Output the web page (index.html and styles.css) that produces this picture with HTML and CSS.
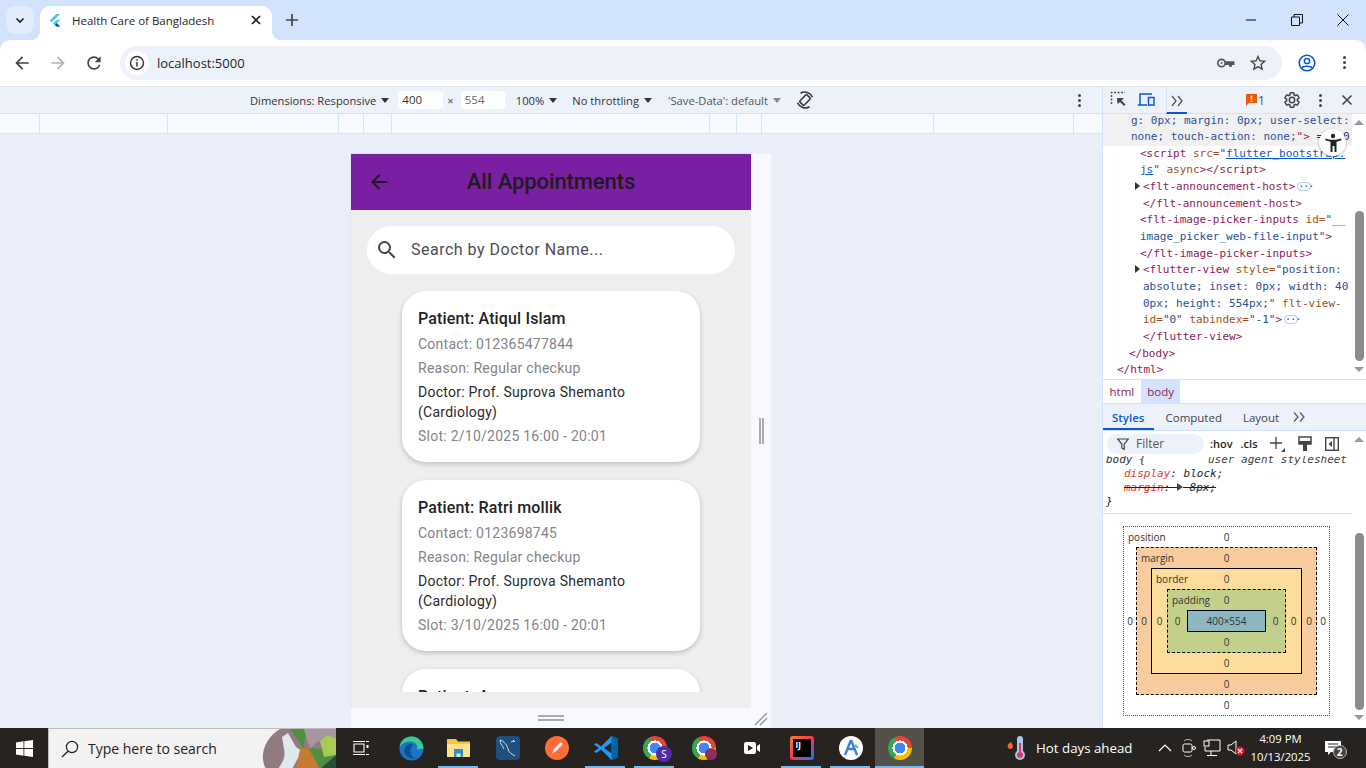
FILE: index.html
```html
<!DOCTYPE html>
<html lang="en">
<head>
    <meta charset="UTF-8">
    <title>Health Care of Bangladesh</title>
    <link rel="stylesheet" href="styles.css">
</head>
<body>
<div class="screen">

    <!-- browser tabs -->
    <div class="tabstrip">
        <div class="tab-search"><svg width="12" height="12" viewBox="0 0 12 12"><path d="M2.5 4.5 6 8l3.5-3.500" fill="none" stroke="#1f1f1f" stroke-width="1.6"/></svg></div>
        <div class="tab">
            <svg class="tab-logo" width="16" height="16" viewBox="0 0 16 16"><path d="M9.5 1 2 8.500l2.200 2.200L14 1z" fill="#47c5fb"/><path d="M9.5 8 5.700 11.800 9.500 15.500H14l-3.900-3.800L14 8z" fill="#47c5fb"/><path d="M7.800 13.800 9.500 15.500H14l-3.900-3.800z" fill="#00569e"/></svg>
            <span class="tab-title">Health Care of Bangladesh</span>
            <svg width="12" height="12" viewBox="0 0 12 12"><path d="M2 2l8 8M10 2l-8 8" stroke="#1f1f1f" stroke-width="1.7"/></svg>
        </div>
        <svg class="new-tab" width="14" height="14" viewBox="0 0 14 14"><path d="M7 1v12M1 7h12" stroke="#444" stroke-width="1.7"/></svg>
        <div class="win-controls">
            <svg width="12" height="12" viewBox="0 0 12 12"><path d="M1 6h10" stroke="#111" stroke-width="1"/></svg>
            <svg width="12" height="12" viewBox="0 0 12 12"><path d="M.5 3h8v8.500h-8zM3 3V.5h8.500V9H8.500" fill="none" stroke="#111"/></svg>
            <svg width="12" height="12" viewBox="0 0 12 12"><path d="M.5.5l11 11M11.500.5l-11 11" stroke="#111"/></svg>
        </div>
    </div>

    <!-- address bar -->
    <div class="toolbar">
        <svg class="nav-icon" width="24" height="24" viewBox="0 0 24 24"><path d="M20 11H7.830l5.590-5.590L12 4l-8 8 8 8 1.410-1.410L7.830 13H20z" fill="#444"/></svg>
        <svg class="nav-icon" width="24" height="24" viewBox="0 0 24 24"><path d="M4 11h12.170l-5.590-5.590L12 4l8 8-8 8-1.410-1.410L16.170 13H4z" fill="#b4b4b4"/></svg>
        <svg class="nav-icon" width="24" height="24" viewBox="0 0 24 24"><path d="M17.650 6.350A7.958 7.958 0 0 0 12 4c-4.420 0-7.990 3.580-7.990 8s3.570 8 7.990 8c3.730 0 6.840-2.550 7.730-6h-2.080A5.990 5.990 0 0 1 12 18c-3.310 0-6-2.690-6-6s2.690-6 6-6c1.660 0 3.140.690 4.220 1.780L13 11h7V4z" fill="#444"/></svg>
        <div class="omnibox">
            <span class="info-badge"><svg width="16" height="16" viewBox="0 0 16 16"><circle cx="8" cy="8" r="6.500" fill="none" stroke="#333" stroke-width="1.4"/><path d="M8 7v4.500M8 4.300v1.500" stroke="#333" stroke-width="1.5"/></svg></span>
            <span class="url">localhost:5000</span>
            <svg class="key-icon" width="20" height="20" viewBox="0 0 20 20"><circle cx="5.500" cy="10" r="3.700" fill="none" stroke="#555" stroke-width="1.7"/><circle cx="5.500" cy="10" r="1" fill="#555"/><path d="M9 8.300h9.500v3.800h-2.500v1.600h-3V12H9z" fill="#555"/></svg>
            <svg class="star-icon" width="20" height="20" viewBox="0 0 24 24"><path d="M22 9.240l-7.190-.620L12 2 9.190 8.630 2 9.240l5.460 4.730L5.820 21 12 17.270 18.180 21l-1.630-7.030L22 9.240zM12 15.400l-3.760 2.270 1-4.280-3.320-2.880 4.380-.380L12 6.100l1.710 4.040 4.380.380-3.320 2.880 1 4.280L12 15.400z" fill="#444"/></svg>
        </div>
        <svg class="profile" width="18" height="18" viewBox="0 0 18 18"><circle cx="9" cy="9" r="7.800" fill="none" stroke="#0b57d0" stroke-width="1.6"/><circle cx="9" cy="7" r="2.600" fill="none" stroke="#0b57d0" stroke-width="1.5"/><path d="M3.800 14c1.400-2.200 9-2.200 10.400 0" fill="none" stroke="#0b57d0" stroke-width="1.5"/></svg>
        <span class="dots dots-toolbar"><i></i><i></i><i></i></span>
    </div>

    <div class="workspace">

        <!-- page side with device emulation -->
        <div class="viewport">
            <div class="device-bar">
                <span>Dimensions: Responsive</span><b class="tri"></b>
                <span class="size-box">400</span><span class="times">×</span><span class="size-box size-dim">554</span>
                <span class="zoom-val">100%</span><b class="tri"></b>
                <span class="throttle">No throttling</span><b class="tri"></b>
                <span class="save-data">'Save-Data': default</span><b class="tri tri-grey"></b>
                <svg class="rotate" width="20" height="20" viewBox="0 0 20 20"><g fill="none" stroke="#333" stroke-width="1.6"><rect x="7" y="5" width="6" height="10" rx="1" transform="rotate(45 10 10)"/><path d="M5.500 3.200a8.500 8.500 0 0 1 12 4M14.500 16.800a8.500 8.500 0 0 1-12-4"/></g></svg>
                <span class="dots dots-device"><i></i><i></i><i></i></span>
            </div>
            <div class="ruler">
                <i style="width:40px"></i><i style="width:128px"></i><i style="width:171px"></i><i style="width:25px"></i><i style="width:28px"></i><i style="width:318px"></i><i style="width:27px"></i><i style="width:25px"></i><i style="width:172px"></i><i style="width:140px"></i>
            </div>
            <div class="stage">
                <div class="device">
                    <div class="phone">
                        <div class="appbar">
                            <svg width="24" height="24" viewBox="0 0 24 24"><path d="M20 11H7.830l5.590-5.590L12 4l-8 8 8 8 1.410-1.410L7.830 13H20z" fill="#1d1b20"/></svg>
                            <span class="appbar-title">All Appointments</span>
                        </div>
                        <div class="searchbar">
                            <svg width="24" height="24" viewBox="0 0 24 24"><path d="M15.500 14h-.790l-.280-.270A6.471 6.471 0 0 0 16 9.500 6.500 6.500 0 1 0 9.500 16c1.610 0 3.090-.590 4.230-1.570l.270.280v.790l5 4.990L20.490 19zm-6 0C7.010 14 5 11.990 5 9.500S7.010 5 9.500 5 14 7.010 14 9.500 11.990 14 9.500 14z" fill="#49454f"/></svg>
                            <span class="search-hint">Search by Doctor Name...</span>
                        </div>
                        <div class="list">
                            <div class="card">
                                <div class="patient">Patient: Atiqul Islam</div>
                                <div class="line">Contact: 012365477844</div>
                                <div class="line">Reason: Regular checkup</div>
                                <div class="line doctor">Doctor: Prof. Suprova Shemanto (Cardiology)</div>
                                <div class="line">Slot: 2/10/2025 16:00 - 20:01</div>
                            </div>
                            <div class="card">
                                <div class="patient">Patient: Ratri mollik</div>
                                <div class="line">Contact: 0123698745</div>
                                <div class="line">Reason: Regular checkup</div>
                                <div class="line doctor">Doctor: Prof. Suprova Shemanto (Cardiology)</div>
                                <div class="line">Slot: 3/10/2025 16:00 - 20:01</div>
                            </div>
                            <div class="card">
                                <div class="patient">Patient: A</div>
                            </div>
                        </div>
                    </div>
                    <div class="handle-right"><i></i><i></i></div>
                    <div class="handle-bottom"><i></i><i></i></div>
                    <div class="handle-corner"><svg width="14" height="14" viewBox="0 0 14 14"><path d="M1 13 13 1M6 13l7-7" stroke="#999" stroke-width="1.5"/></svg></div>
                </div>
            </div>
        </div>

        <!-- devtools -->
        <div class="devtools">
            <div class="dt-toolbar">
                <svg class="dt-inspect" width="18" height="18" viewBox="0 0 18 18"><path d="M1.500 13V1.500H15" fill="none" stroke="#555" stroke-width="1.5" stroke-dasharray="2 1.5"/><path d="M7 7h7l-2.500 2.500 4 4-1.500 1.500-4-4L7.500 13z" fill="#444"/></svg>
                <svg class="dt-device" width="18" height="18" viewBox="0 0 18 18"><path d="M1 14h9M3 14V3h12" fill="none" stroke="#0b57d0" stroke-width="1.5"/><rect x="11.500" y="6.500" width="5.500" height="7.500" fill="none" stroke="#0b57d0" stroke-width="1.5"/></svg>
                <span class="dt-more">
                    <svg width="14" height="12" viewBox="0 0 14 12"><path d="M2 1l4 5-4 5M8 1l4 5-4 5" fill="none" stroke="#555" stroke-width="1.3"/></svg>
                </span>
                <span class="dt-issues"><svg width="11" height="12" viewBox="0 0 11 12"><path d="M0 0h11v9H3l-3 3z" fill="#e8590c"/><path d="M5.500 1.500v4M5.500 6.500v1.500" stroke="#fff" stroke-width="1.4"/></svg>1</span>
                <svg class="dt-gear" width="18" height="18" viewBox="0 0 24 24"><path d="M19.140 12.940c.040-.300.060-.610.060-.940 0-.320-.020-.640-.070-.940l2.030-1.580a.490.490 0 0 0 .120-.610l-1.920-3.320a.488.488 0 0 0-.590-.220l-2.390.960c-.500-.380-1.030-.700-1.620-.940l-.360-2.540a.484.484 0 0 0-.480-.410h-3.840c-.240 0-.430.170-.470.410l-.360 2.540c-.590.240-1.130.570-1.620.940l-2.390-.960c-.220-.080-.470 0-.590.220L2.740 8.870c-.120.210-.080.470.120.610l2.030 1.580c-.050.300-.090.630-.090.940s.020.640.070.940l-2.030 1.580a.490.490 0 0 0-.12.610l1.920 3.320c.12.220.37.290.59.220l2.390-.96c.50.38 1.030.70 1.620.94l.36 2.54c.05.24.24.41.48.41h3.84c.24 0 .44-.17.47-.41l.36-2.54c.59-.24 1.13-.56 1.62-.94l2.39.96c.22.08.47 0 .59-.22l1.92-3.320c.12-.22.07-.47-.12-.61l-2.010-1.580zM12 15.600c-1.980 0-3.600-1.620-3.600-3.600s1.620-3.600 3.600-3.600 3.600 1.620 3.600 3.600-1.620 3.600-3.600 3.600z" fill="none" stroke="#444" stroke-width="2"/></svg>
                <span class="dots dots-dt"><i></i><i></i><i></i></span>
                <svg class="dt-close" width="12" height="12" viewBox="0 0 12 12"><path d="M1.500 1.500l9 9M10.500 1.500l-9 9" stroke="#444" stroke-width="1.6"/></svg>
            </div>

            <div class="elements">
                <div class="code">
                    <div class="cl sel in1"><span class="val">g: 0px; margin: 0px; user-select:</span></div>
                    <div class="cl sel in1"><span class="val">none; touch-action: none;</span><span class="tag">"&gt;</span> == $0</div>
                    <div class="cl in3"><span class="tag">&lt;script</span> <span class="att">src=</span><span class="val">"<u>flutter_bootstrap.</u></span></div>
                    <div class="cl in3"><span class="val"><u>js</u>"</span> <span class="att">async</span><span class="tag">&gt;&lt;/script&gt;</span></div>
                    <div class="cl in4 arrow"><span class="tag">&lt;flt-announcement-host&gt;</span><span class="more">···</span></div>
                    <div class="cl in4"><span class="tag">&lt;/flt-announcement-host&gt;</span></div>
                    <div class="cl in3"><span class="tag">&lt;flt-image-picker-inputs</span> <span class="att">id=</span><span class="val">"__</span></div>
                    <div class="cl in3"><span class="val">image_picker_web-file-input"</span><span class="tag">&gt;</span></div>
                    <div class="cl in3"><span class="tag">&lt;/flt-image-picker-inputs&gt;</span></div>
                    <div class="cl in4 arrow"><span class="tag">&lt;flutter-view</span> <span class="att">style=</span><span class="val">"position:</span></div>
                    <div class="cl in4"><span class="val">absolute; inset: 0px; width: 40</span></div>
                    <div class="cl in4"><span class="val">0px; height: 554px;"</span> <span class="att">flt-view-</span></div>
                    <div class="cl in4"><span class="att">id=</span><span class="val">"0"</span> <span class="att">tabindex=</span><span class="val">"-1"</span><span class="tag">&gt;</span><span class="more">···</span></div>
                    <div class="cl in4"><span class="tag">&lt;/flutter-view&gt;</span></div>
                    <div class="cl in2"><span class="tag">&lt;/body&gt;</span></div>
                    <div class="cl in0"><span class="tag">&lt;/html&gt;</span></div>
                </div>
                <div class="scrollbar sb-code"><b class="up"></b><i></i><b class="down"></b></div>
                <div class="a11y"><svg width="18" height="20" viewBox="0 0 18 20"><circle cx="9" cy="3" r="2.200" fill="#222"/><path d="M1 5.500c3 1 5 1.300 8 1.300s5-.3 8-1.300l.5 1.700-5 1.500V19h-2v-6H8.500v6h-2V8.700l-5-1.500z" fill="#222"/></svg></div>
            </div>

            <div class="crumbs"><span class="crumb tag">html</span><span class="crumb crumb-on tag">body</span></div>

            <div class="subtabs">
                <span class="subtab subtab-on">Styles</span><span class="subtab">Computed</span><span class="subtab">Layout</span>
                <svg class="subtab-more" width="12" height="10" viewBox="0 0 12 10"><path d="M1 .5 5 5 1 9.500M7 .5 11 5 7 9.500" fill="none" stroke="#555" stroke-width="1.2"/></svg>
            </div>

            <div class="styles-pane">
                <div class="styles-main">
                    <div class="filter-row">
                        <span class="filter"><svg width="12" height="12" viewBox="0 0 12 12"><path d="M.5 1h11L7.200 6v5.500L4.800 10V6z" fill="none" stroke="#444" stroke-width="1.2"/></svg>Filter</span>
                        <span class="f-btn hov">:hov</span><span class="f-btn cls">.cls</span>
                        <svg class="f-plus" width="16" height="16" viewBox="0 0 16 16"><path d="M7 1v12M1 7h12" stroke="#444" stroke-width="1.3"/><path d="M16 12v4h-4z" fill="#444"/></svg>
                        <svg class="f-paint" width="14" height="16" viewBox="0 0 14 16"><path d="M1 1h12v7H1z" fill="none" stroke="#444" stroke-width="1.5"/><path d="M1 5h12v3H1zM5 8h4v7H5z" fill="#444"/></svg>
                        <svg class="f-side" width="14" height="14" viewBox="0 0 14 14"><rect x=".7" y=".7" width="12.600" height="12.600" fill="none" stroke="#444" stroke-width="1.4"/><path d="M9 1v12" stroke="#444" stroke-width="1.4"/><path d="M7 4v6L3.500 7z" fill="#444"/></svg>
                    </div>
                    <div class="rule">
                        <div class="rule-line rule-head"><span>body {</span><span class="ua">user agent stylesheet</span></div>
                        <div class="rule-line rule-prop"><span class="prop">display</span>: block;</div>
                        <div class="rule-line rule-prop struck"><span class="prop">margin</span>: <span class="mini-tri"></span> 8px;</div>
                        <div class="rule-line">}</div>
                    </div>
                    <div class="boxmodel">
                        <div class="bm bm-position">
                            <div class="bm-top"><span class="bm-label">position</span><span>0</span></div>
                            <span class="bm-side">0</span>
                            <div class="bm bm-margin">
                                <div class="bm-top"><span class="bm-label">margin</span><span>0</span></div>
                                <span class="bm-side">0</span>
                                <div class="bm bm-border">
                                    <div class="bm-top"><span class="bm-label">border</span><span>0</span></div>
                                    <span class="bm-side">0</span>
                                    <div class="bm bm-padding">
                                        <div class="bm-top"><span class="bm-label">padding</span><span>0</span></div>
                                        <span class="bm-side">0</span>
                                        <div class="bm-content">400×554</div>
                                        <span class="bm-side">0</span>
                                        <div class="bm-bottom">0</div>
                                    </div>
                                    <span class="bm-side">0</span>
                                    <div class="bm-bottom">0</div>
                                </div>
                                <span class="bm-side">0</span>
                                <div class="bm-bottom">0</div>
                            </div>
                            <span class="bm-side">0</span>
                            <div class="bm-bottom">0</div>
                        </div>
                    </div>
                </div>
                <div class="scrollbar sb-styles"><b class="up"></b><i></i><b class="down"></b></div>
            </div>
        </div>
    </div>

    <!-- windows taskbar -->
    <div class="taskbar">
        <div class="start"><svg width="17" height="17" viewBox="0 0 17 17"><path d="M0 2.400 7.500 1.300v6.800H0zM8.300 1.200 17 0v8.100H8.300zM0 8.900h7.500v6.800L0 14.600zM8.300 8.900H17V17l-8.700-1.200z" fill="#fff"/></svg></div>
        <div class="task-search">
            <svg width="18" height="18" viewBox="0 0 18 18"><circle cx="11" cy="7" r="5.600" fill="none" stroke="#222" stroke-width="1.2"/><path d="M7 11.200 1 17" stroke="#222" stroke-width="1.3"/></svg>
            <span class="task-search-text">Type here to search</span>
            <svg class="task-art" width="76" height="40" viewBox="0 0 76 40">
                <path d="M20 0H76V40H6C-2 26 6 8 20 0z" fill="#8f7b80"/>
                <path d="M30 0h16l-2 18 32 4v18H56L44 20z" fill="#4f8f3f"/>
                <path d="M44 0h32v14l-10 2-8-4-8 8z" fill="#a596a0"/>
                <path d="M22 8 28 4l8 14 6 4-10 18H18c4-6 8-12 6-20z" fill="#dfe9ec"/>
                <path d="M36 40l4-20 8-2 12 22z" fill="#c77936"/>
                <path d="M60 12l8-6 8 4v16l-12 2z" fill="#a7cc55"/>
                <path d="M60 40l16-14v14z" fill="#244f3a"/>
            </svg>
        </div>
        <div class="task-icons">
            <div class="ti"><svg width="16" height="14" viewBox="0 0 16 14"><path d="M1 3h10v8H1zM0 .5h12M0 13.500h12" fill="none" stroke="#fff" stroke-width="1.1"/><path d="M13 .5h3M13 13.500h3" stroke="#fff"/><rect x="13.500" y="4" width="2" height="3" fill="#fff"/></svg></div>
            <div class="ti ti-edge"><svg width="25" height="25" viewBox="0 0 25 25"><circle cx="12.500" cy="12.500" r="12" fill="#1b74c9"/><path d="M24.500 12.500C24 5 18.500.5 12.500.5 6 .5 1.500 5 .5 11c2.500-4 7-6 11-5.500 4.500.5 7 3 7 6 0 1.500-1 2.500-3.500 2.500z" fill="#3ccb8e"/><path d="M12 8c-4 0-6.500 3-6.500 6.500 0 5 5 9 11.500 8-3.500-1-5.500-4-5.500-7 0-3 1-5.500 3-7z" fill="#0c4f8f"/></svg></div>
            <div class="ti ti-open"><svg width="23" height="20" viewBox="0 0 23 20"><path d="M0 1h9l2 2.500h12V19H0z" fill="#f6c445"/><path d="M0 6h23v13H0z" fill="#fde38a"/><path d="M7 11h9v8h-2.500v-3.500h-4V19H7z" fill="#2a8fd8"/></svg></div>
            <div class="ti"><div class="tile-mysql"><svg width="20" height="20" viewBox="0 0 20 20"><path d="M2 2c4 1 7 5 8 9s4 5 7 7M2 2c0 4 3 6 4 9M15 2l2 2M13 4l3-1" fill="none" stroke="#d7e4ee" stroke-width="1"/></svg></div></div>
            <div class="ti"><svg width="24" height="24" viewBox="0 0 24 24"><circle cx="12" cy="12" r="12" fill="#ff6c37"/><path d="M7 18l2-5 6-6c2-1 3 0 2 2l-6 6zM7 18l2 0" fill="#fff"/></svg></div>
            <div class="ti ti-open"><svg width="24" height="24" viewBox="0 0 24 24"><path d="M17.500 0 24 3v18l-6.500 3L7 13.500 2.500 17 0 15.500 5 12 0 8.500 2.500 7 7 10.500z" fill="#1f9cf0"/><path d="M17.500 0 24 3v18l-6.500 3z" fill="#0065a9"/><path d="M17.500 6.500v11L10 12z" fill="#27282c"/></svg></div>
            <div class="ti ti-open"><div class="chrome"></div><span class="chrome-s">S</span></div>
            <div class="ti"><div class="chrome"></div><span class="chrome-p"></span></div>
            <div class="ti"><svg width="17" height="12" viewBox="0 0 17 12"><rect width="12" height="12" rx="2" fill="#fff"/><path d="M4 3l5 3-5 3z" fill="#222"/><path d="M13 4l3-2v8l-3-2z" fill="#fff"/></svg></div>
            <div class="ti ti-open"><div class="tile-idea"><span>IJ</span></div></div>
            <div class="ti ti-open"><div class="tile-as"><svg width="18" height="20" viewBox="0 0 18 20"><path d="M9 2 3 17M9 2l6 15M5 11h8" fill="none" stroke="#3b7ddd" stroke-width="2.4"/><path d="M13 7l3 3" stroke="#3ccb8e" stroke-width="2"/></svg></div></div>
            <div class="ti ti-open ti-active"><div class="chrome"></div></div>
        </div>
        <div class="tray">
            <svg class="thermo" width="20" height="26" viewBox="0 0 20 26"><path d="M3.500 8c-2 1-2.500 4-1 5.500 2 1 4 .5 4.500-1.500.3-2-1.500-3-1.500-5z" fill="#ef6a2e"/><rect x="11" y="1" width="6" height="17" rx="3" fill="#a9c8ea"/><circle cx="14" cy="20" r="5" fill="#a9c8ea"/><circle cx="14" cy="20" r="3" fill="#e0366a"/><rect x="13" y="8" width="2" height="10" fill="#e0366a"/></svg>
            <span class="weather">Hot days ahead</span>
            <svg class="tray-chev" width="14" height="8" viewBox="0 0 14 8"><path d="M1 7l6-6 6 6" fill="none" stroke="#fff" stroke-width="1.2"/></svg>
            <svg class="tray-meet" width="14" height="20" viewBox="0 0 14 20"><rect x="1" y="6" width="9" height="8" rx="1.500" fill="none" stroke="#fff"/><circle cx="12" cy="10" r="1.500" fill="none" stroke="#fff"/><path d="M2 3c2-2 6-2 8 0M2 17c2 2 6 2 8 0" fill="none" stroke="#bbb"/></svg>
            <svg class="tray-net" width="18" height="18" viewBox="0 0 18 18"><path d="M4 1h13v11H2V8M8 12v4M4 16.500h10" fill="none" stroke="#fff"/><rect x="1" y="2" width="5" height="5" fill="#272320" stroke="#fff"/></svg>
            <svg class="tray-vol" width="18" height="18" viewBox="0 0 18 18"><path d="M1 6h3l5-4v13l-5-4H1z" fill="none" stroke="#fff"/><circle cx="13" cy="12" r="4.500" fill="#e81123"/><path d="M11 10l4 4M15 10l-4 4" stroke="#fff" stroke-width="1.2"/></svg>
            <div class="clock"><span>4:09 PM</span><span>10/13/2025</span></div>
            <div class="notif"><svg width="18" height="16" viewBox="0 0 18 16"><path d="M1 1h16v11H7l-3 3v-3H1z" fill="#fff"/><path d="M4 4h10M4 7h10" stroke="#272320"/></svg><span class="notif-count">2</span></div>
        </div>
    </div>
</div>
</body>
</html>
```

FILE: styles.css
```css
* {
    box-sizing: border-box;
}

body {
    margin: 0;
    background: #fff;
    font-family: 'Open Sans', 'Noto Sans', sans-serif;
    font-size: 12px;
    color: #1f1f1f;
    overflow: hidden;
}

.screen {
    width: 1366px;
    height: 768px;
    display: flex;
    flex-direction: column;
    overflow: hidden;
    background: #d3e3fd;
}

/* tabs */
.tabstrip {
    height: 40px;
    flex: none;
    display: flex;
    align-items: flex-end;
    padding-left: 6px;
}

.tab-search {
    width: 28px;
    height: 28px;
    margin-bottom: 6px;
    border-radius: 8px;
    background: #e1ebfb;
    display: flex;
    align-items: center;
    justify-content: center;
}

.tab {
    position: relative;
    width: 232px;
    height: 34px;
    margin-left: 6px;
    background: #fff;
    border-radius: 10px 10px 0 0;
    display: flex;
    align-items: center;
    padding: 0 10px 6px 8px;
}

/* little flares where the tab meets the toolbar */
.tab::before,
.tab::after {
    content: "";
    position: absolute;
    bottom: 0;
    width: 8px;
    height: 8px;
}

.tab::before {
    left: -8px;
    background: radial-gradient(circle at 0 0, transparent 7.5px, #fff 8px);
}

.tab::after {
    right: -8px;
    background: radial-gradient(circle at 100% 0, transparent 7.5px, #fff 8px);
}

.tab-logo {
    width: 14px;
    height: 14px;
}

.tab-title {
    flex: 1;
    margin-left: 10px;
    font-size: 11.5px;
}

.new-tab {
    margin: 0 0 13px 13px;
}

.win-controls {
    margin-left: auto;
    display: flex;
    gap: 34px;
    padding: 0 17px 14px 0;
}

/* address bar */
.toolbar {
    height: 47px;
    flex: none;
    background: #fff;
    border-bottom: 1px solid #dfe3ea;
    border-radius: 10px 10px 0 0;
    display: flex;
    align-items: center;
    padding: 0 0 1px 12px;
}

.nav-icon {
    width: 20px;
    height: 20px;
    margin-right: 16px;
}

.omnibox {
    width: 1162px;
    height: 34px;
    border-radius: 17px;
    background: #edf2fa;
    display: flex;
    align-items: center;
    padding-left: 5px;
}

.info-badge {
    width: 24px;
    height: 24px;
    border-radius: 50%;
    background: #fff;
    display: flex;
    align-items: center;
    justify-content: center;
}

.url {
    margin-left: 8px;
    font-size: 13px;
    flex: 1;
}

.key-icon {
    margin-right: 12px;
}

.star-icon {
    margin-right: 14px;
}

.profile {
    margin-left: 16px;
}

.dots {
    display: inline-flex;
    flex-direction: column;
    gap: 2px;
}

.dots i {
    width: 3px;
    height: 3px;
    border-radius: 50%;
    background: #444;
}

.dots-toolbar {
    margin-left: 27px;
}

/* main split */
.workspace {
    flex: 1;
    display: flex;
    min-height: 0;
}

.viewport {
    width: 1102px;
    display: flex;
    flex-direction: column;
    background: #e9eef8;
}

.device-bar {
    height: 27px;
    flex: none;
    background: #edf1fa;
    border-bottom: 1px solid #d3e3fd;
    display: flex;
    align-items: center;
    padding-left: 250px;
    font-size: 11.2px;
    color: #333;
}

.tri {
    width: 0;
    height: 0;
    margin-left: 5px;
    border-left: 4px solid transparent;
    border-right: 4px solid transparent;
    border-top: 5px solid #333;
}

.tri-grey {
    border-top-color: #888;
}

.size-box {
    width: 45px;
    height: 18px;
    margin-left: 9px;
    padding-left: 4px;
    line-height: 18px;
    font-size: 11.5px;
    background: #fff;
    border-radius: 3px;
}

.size-dim {
    width: 44px;
    color: #666;
    margin-left: 7px;
}

.times {
    margin-left: 4px;
    color: #555;
}

.zoom-val {
    margin-left: 11px;
}

.throttle {
    margin-left: 15px;
}

.save-data {
    margin-left: 16px;
    color: #555;
}

.rotate {
    margin-left: 14px;
}

.dots-device {
    margin-left: auto;
    margin-right: 21px;
}

.ruler {
    height: 20px;
    flex: none;
    display: flex;
    background: #f8f9ff;
    border-bottom: 1px solid #d3e3fd;
}

.ruler i {
    height: 19px;
    border-right: 1px solid #d3e3fd;
}

.stage {
    flex: 1;
    padding: 20px 0 0 351px;
}

.device {
    display: grid;
    grid-template-columns: 400px 20px;
    grid-template-rows: 554px 20px;
}

.handle-right {
    background: #f7f9ff;
    display: flex;
    justify-content: center;
    align-items: center;
    gap: 1px;
}

.handle-right i {
    width: 2px;
    height: 26px;
    background: #aaa;
}

.handle-bottom {
    background: #f7f9ff;
    display: flex;
    flex-direction: column;
    align-items: center;
    justify-content: center;
    gap: 2px;
}

.handle-bottom i {
    width: 26px;
    height: 2px;
    background: #aaa;
}

.handle-corner {
    background: #f7f9ff;
    display: flex;
    align-items: center;
    justify-content: center;
    padding-top: 2px;
}

/* flutter app */
.phone {
    background: #eeeeee;
    box-shadow: 0 0 1px #bbb;
    display: flex;
    flex-direction: column;
    font-family: Roboto, sans-serif;
}

.appbar {
    height: 56px;
    flex: none;
    background: #7b1fa2;
    display: flex;
    align-items: center;
    padding-left: 16px;
}

.appbar-title {
    flex: 1;
    margin: 0 40px 2px 0;
    text-align: center;
    font-size: 22px;
    font-weight: 500;
    letter-spacing: -0.1px;
    color: #1d1b20;
}

.searchbar {
    height: 48px;
    flex: none;
    margin: 16px 16px 0;
    background: #fff;
    border-radius: 24px;
    display: flex;
    align-items: center;
    padding: 0 0 1px 8px;
}

.search-hint {
    margin: 0 0 1px 12px;
    font-size: 16px;
    letter-spacing: 0.5px;
    color: #4f4c55;
}

.list {
    height: 401px;
    flex: none;
    margin-top: 17px;
    padding: 0 51px;
    overflow: hidden;
}

.card {
    height: 171px;
    margin-bottom: 18px;
    padding: 16px;
    background: #fff;
    border-radius: 24px;
    box-shadow: 0 2px 5px rgba(0, 0, 0, 0.2);
}

.patient {
    height: 24px;
    margin-bottom: 3px;
    font-size: 16px;
    font-weight: 500;
    line-height: 24px;
    letter-spacing: 0.15px;
    color: #222;
}

.line {
    margin-bottom: 4px;
    font-size: 14px;
    line-height: 20px;
    letter-spacing: 0.25px;
    color: #85838a;
}

.doctor {
    color: #2b2b2b;
}

/* devtools */
.devtools {
    position: relative;
    width: 264px;
    display: flex;
    flex-direction: column;
    background: #fff;
    border-left: 1px solid #d3e3fd;
}

.dt-toolbar {
    height: 27px;
    flex: none;
    background: #edf1fa;
    border-bottom: 1px solid #d3e3fd;
    display: flex;
    align-items: center;
    padding-left: 7px;
}

.dt-device {
    margin-left: 9px;
}

.dt-more {
    height: 27px;
    margin-left: 11px;
    padding: 7px 3px 0;
    border-bottom: 2px solid #0b57d0;
    border-left: 1px solid #d3e3fd;
}

.dt-issues {
    margin-left: 59px;
    margin-right: 10px;
    display: flex;
    align-items: center;
    gap: 1px;
    color: #555;
}

.dt-gear {
    margin-left: 8px;
}

.dots-dt {
    margin-left: 18px;
}

.dt-close {
    margin-left: 19px;
}

.elements {
    height: 266px;
    flex: none;
    display: flex;
    overflow: hidden;
    border-bottom: 1px solid #d3e3fd;
}

.code {
    flex: 1;
    min-width: 0;
    margin-top: -1.5px;
    font-family: 'DejaVu Sans Mono', monospace;
    font-size: 11px;
    line-height: 16.67px;
    color: #333;
    white-space: nowrap;
    overflow: hidden;
}

.cl {
    position: relative;
    height: 16.67px;
}

.sel {
    background: #f1f1f1;
}

.in0 { padding-left: 14px; }
.in1 { padding-left: 28px; }
.in2 { padding-left: 26px; }
.in3 { padding-left: 37px; }
.in4 { padding-left: 40px; }

.arrow::before {
    content: "";
    position: absolute;
    left: 32px;
    top: 3px;
    border-top: 4px solid transparent;
    border-bottom: 4px solid transparent;
    border-left: 5px solid #333;
}

.tag { color: #8e1a5b; }
.att { color: #a0501a; }
.val { color: #2a4f9b; }

.val u {
    color: #0b57d0;
}

.more {
    display: inline-block;
    width: 14px;
    height: 9px;
    margin-left: 2px;
    line-height: 7px;
    font-size: 10px;
    text-align: center;
    letter-spacing: -1px;
    color: #0b57d0;
    border: 1px solid #a8c7fa;
    border-radius: 5px;
}

.scrollbar {
    width: 14px;
    flex: none;
    display: flex;
    flex-direction: column;
    align-items: center;
    background: #fff;
}

.scrollbar i {
    width: 9px;
    background: #8c8c8c;
    border-radius: 5px;
}

.up,
.down {
    width: 0;
    height: 0;
    border-left: 5px solid transparent;
    border-right: 5px solid transparent;
}

.up {
    border-bottom: 5px solid #999;
}

.down {
    border-top: 5px solid #999;
}

.sb-code {
    padding-top: 6px;
}

.sb-code i {
    height: 150px;
    margin: 86px 0 6px;
}

.a11y {
    position: absolute;
    left: 216px;
    top: 42px;
    width: 27px;
    height: 27px;
    border-radius: 50%;
    background: #fff;
    box-shadow: 0 1px 3px rgba(0, 0, 0, 0.3);
    display: flex;
    align-items: center;
    justify-content: center;
}

.crumbs {
    height: 24px;
    flex: none;
    display: flex;
    font-size: 11.5px;
    border-bottom: 1px solid #d3e3fd;
}

.crumb {
    padding: 0 6.5px;
    line-height: 23px;
}

.crumb-on {
    background: #d3e3fd;
}

.subtabs {
    height: 27px;
    flex: none;
    background: #edf1fa;
    border-bottom: 1px solid #d3e3fd;
    display: flex;
    align-items: center;
    font-size: 11.5px;
    color: #444;
}

.subtab {
    padding: 0 10px 0 11px;
    height: 26px;
    line-height: 28px;
}

.subtab-on {
    padding: 0 10px 0 9px;
    color: #0b57d0;
    border-bottom: 2px solid #0b57d0;
    font-weight: 600;
}

.subtab-more {
    margin-left: 4px;
}

.styles-pane {
    flex: 1;
    min-height: 0;
    display: flex;
}

.styles-main {
    flex: 1;
    min-width: 0;
    display: flex;
    flex-direction: column;
    overflow: hidden;
}

.filter-row {
    height: 25px;
    flex: none;
    background: #fff;
    display: flex;
    align-items: center;
    padding-left: 4px;
}

.filter {
    width: 97px;
    height: 20px;
    border-radius: 10px;
    background: #edf1fa;
    display: flex;
    align-items: center;
    gap: 7px;
    padding-left: 10px;
    color: #555;
}

.f-btn {
    font-weight: 600;
    font-size: 11px;
}

.hov {
    margin-left: 6px;
}

.cls {
    margin-left: 8px;
}

.f-plus {
    margin-left: 11px;
}

.f-paint {
    margin-left: 13px;
}

.f-side {
    margin-left: 13px;
}

.rule {
    height: 58px;
    flex: none;
    padding-left: 3px;
    border-bottom: 1px solid #d3e3fd;
    font-family: 'DejaVu Sans Mono', monospace;
    font-size: 11px;
    font-style: italic;
    line-height: 14px;
    overflow: hidden;
}

.rule-head {
    display: flex;
    justify-content: space-between;
    margin-top: -3px;
    padding-right: 5px;
    color: #333;
}

.ua {
    color: #444;
}

.rule-prop {
    padding-left: 18px;
}

.prop {
    color: #e3392f;
}

.struck {
    text-decoration: line-through;
}

.mini-tri {
    display: inline-block;
    border-top: 4px solid transparent;
    border-bottom: 4px solid transparent;
    border-left: 6px solid #444;
}

.boxmodel {
    flex: 1;
    padding: 12px 0 0 21px;
    font-size: 10px;
    color: #333;
}

.bm {
    display: grid;
    grid-template-rows: 20px auto 20px;
    align-items: center;
    text-align: center;
}

.bm-top {
    grid-column: 1 / 4;
    display: grid;
    grid-template-columns: 1fr auto 1fr;
    text-align: center;
}

.bm-label {
    grid-column: 1;
    text-align: left;
    padding-left: 4px;
}

.bm-top span:last-child {
    grid-column: 2;
}

.bm-bottom {
    grid-column: 1 / 4;
}

.bm-position {
    width: 207px;
    grid-template-columns: 12px 1fr 12px;
    border: 1px dotted #555;
    margin-left: -1px;
}

.bm-margin {
    grid-template-columns: 14px 1fr 14px;
    background: #f9cc9d;
    border: 1px dashed #000;
}

.bm-border {
    grid-template-columns: 15px 1fr 15px;
    background: #fddd9b;
    border: 1px solid #000;
}

.bm-padding {
    grid-template-columns: 19px 1fr 19px;
    background: #c3d08b;
    border: 1px dashed #000;
}

.bm-content {
    height: 22px;
    line-height: 20px;
    background: #8cb6c0;
    border: 1px solid #000;
}

.sb-styles {
    padding-top: 6px;
}

.sb-styles i {
    height: 177px;
    margin: 91px 0 5px;
}

/* taskbar */
.taskbar {
    height: 40px;
    flex: none;
    background: #272320;
    display: flex;
    align-items: center;
    color: #fff;
}

.start {
    width: 48px;
    display: flex;
    justify-content: center;
}

.task-search {
    width: 288px;
    height: 40px;
    background: #f2f2f2;
    border: 1px solid #bbb;
    border-width: 1px 0 0 1px;
    display: flex;
    align-items: center;
    padding-left: 12px;
    color: #222;
}

.task-search-text {
    flex: 1;
    margin-left: 9px;
    font-size: 14px;
}

.task-icons {
    display: flex;
}

.ti {
    position: relative;
    width: 49px;
    height: 40px;
    display: flex;
    align-items: center;
    justify-content: center;
}

.ti-edge {
    padding-left: 3px;
}

.ti-open::after {
    content: "";
    position: absolute;
    left: 4px;
    right: 5px;
    bottom: 0;
    height: 2px;
    background: #76b9ed;
}

.ti-active {
    background: #55514a;
}

.ti-active::after {
    left: 0;
    right: 0;
}

.tile-mysql {
    width: 24px;
    height: 24px;
    border-radius: 4px;
    background: #1f4f7c;
    display: flex;
    align-items: center;
    justify-content: center;
}

.chrome {
    width: 24px;
    height: 24px;
    border-radius: 50%;
    background:
        radial-gradient(circle, #4285f4 0 31%, #fff 32% 44%, transparent 45%),
        conic-gradient(from -30deg, #ea4335 0 120deg, #fbbc04 120deg 240deg, #34a853 240deg 360deg);
}

.chrome-s {
    position: absolute;
    left: 26px;
    top: 18px;
    width: 16px;
    height: 16px;
    border-radius: 50%;
    background: #4a2fa8;
    font-size: 10px;
    line-height: 16px;
    text-align: center;
}

.chrome-p {
    position: absolute;
    left: 26px;
    top: 20px;
    width: 12px;
    height: 12px;
    border-radius: 50%;
    background: #8d2f5c;
}

.tile-idea {
    width: 24px;
    height: 24px;
    background: linear-gradient(135deg, #fc801d, #fe315d 50%, #087cfa);
    border-radius: 3px;
    padding: 3px;
}

.tile-idea span {
    display: block;
    width: 18px;
    height: 18px;
    background: #000;
    color: #fff;
    font-size: 8px;
    font-weight: 700;
    line-height: 12px;
    padding-left: 3px;
}

.tile-as {
    width: 24px;
    height: 24px;
    border-radius: 50%;
    background: #fff;
    display: flex;
    align-items: center;
    justify-content: center;
}

.tray {
    flex: 1;
    display: flex;
    align-items: center;
    padding-left: 82px;
}

.weather {
    margin-left: 10px;
    font-size: 13.3px;
}

.tray-chev {
    margin-left: 25px;
}

.tray-meet {
    margin-left: 10px;
}

.tray-net {
    margin-left: 7px;
}

.tray-vol {
    margin-left: 6px;
}

.clock {
    width: 68px;
    margin-left: 2px;
    display: flex;
    flex-direction: column;
    align-items: center;
    font-size: 11.3px;
    line-height: 18px;
}

.notif {
    position: relative;
    margin-left: 9px;
    padding-top: 3px;
}

.notif-count {
    position: absolute;
    left: 9px;
    top: 8px;
    width: 14px;
    height: 14px;
    border-radius: 50%;
    background: #444;
    border: 1px solid #bbb;
    font-size: 10px;
    font-weight: 700;
    line-height: 12px;
    text-align: center;
}
```
